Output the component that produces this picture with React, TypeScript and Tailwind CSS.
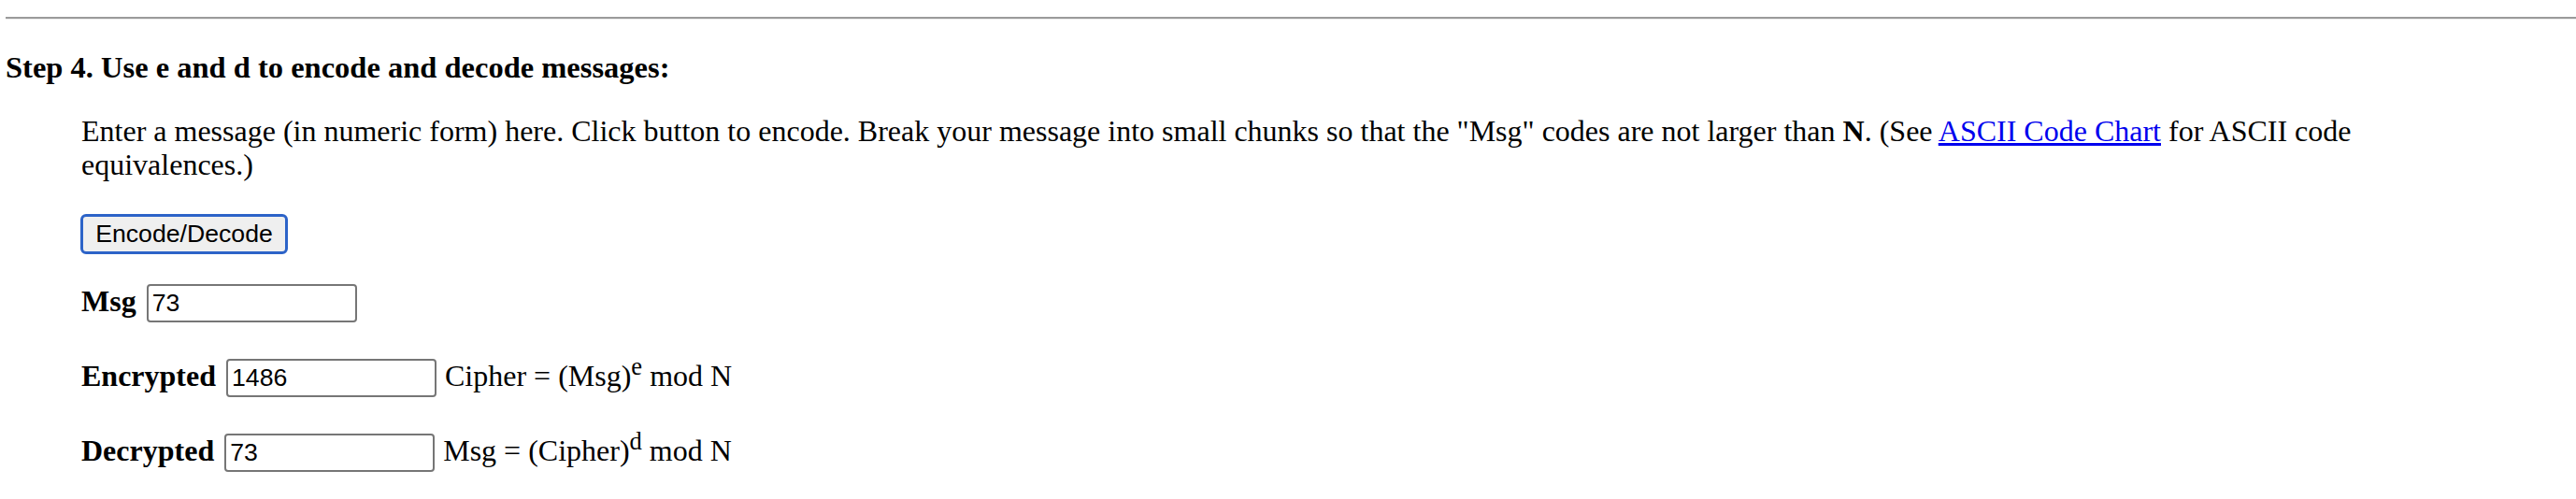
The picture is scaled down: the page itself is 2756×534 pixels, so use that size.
const inputClassName =
    "ml-[3px] mr-px inline-block h-[41px] w-[225px] rounded-[4px] border-2 border-[#767676] bg-white px-[4px] align-baseline font-['Liberation_Sans',Arial,sans-serif] text-[26.67px] text-black outline-none";

const supClassName = "-top-[0.45em] text-[0.83em]";

function Field({label, value, note}: {label: string; value: string; note?: React.ReactNode}) {
    return (
        <p className="mt-[39px]">
            <b>{label}</b> <input type="text" defaultValue={value} className={inputClassName} /> {note}
        </p>
    );
}

export default function App() {
    return (
        <div className="min-h-[534px] w-full bg-white font-['Liberation_Serif','Times_New_Roman',serif] text-[32px] leading-[35.5px] text-black">
            <div className="pt-[18px] pl-[6px]">
                <div className="h-[2px] bg-[#9b9b9b]" />
                <div className="h-px bg-[#ededed]" />
            </div>

            <p className="mt-[33.5px] pl-[6px] text-[32.5px] font-bold">
                Step 4. Use e and d to encode and decode messages:
            </p>

            <div className="pl-[87px] pr-[81px]">
                <p className="mt-[33px]">
                    Enter a message (in numeric form) here. Click button to encode. Break your message into small
                    chunks so that the "Msg" codes are not larger than <b>N</b>. (See{" "}
                    <a href="#" className="text-[#0000ee] underline">
                        ASCII Code Chart
                    </a>{" "}
                    <span>for ASCII code</span>
                    <br />
                    <span>equivalences.)</span>
                </p>

                <div className="mt-[35px] -ml-px leading-none">
                    <button
                        type="button"
                        className="h-[43px] w-[222px] rounded-[6px] border-[3px] border-[#2c63c8] bg-[#efefef] font-['Liberation_Sans',Arial,sans-serif] text-[26.67px] leading-none text-black">
                        Encode/Decode
                    </button>
                </div>

                <p className="mt-[32px]">
                    <b>Msg</b> <input type="text" defaultValue="73" className={inputClassName} />
                </p>

                <Field
                    label="Encrypted"
                    value="1486"
                    note={
                        <span>
                            Cipher = (Msg)<sup className={supClassName}>e</sup> mod N
                        </span>
                    }
                />

                <Field
                    label="Decrypted"
                    value="73"
                    note={
                        <span>
                            Msg = (Cipher)<sup className={supClassName}>d</sup> mod N
                        </span>
                    }
                />
            </div>
        </div>
    );
}
